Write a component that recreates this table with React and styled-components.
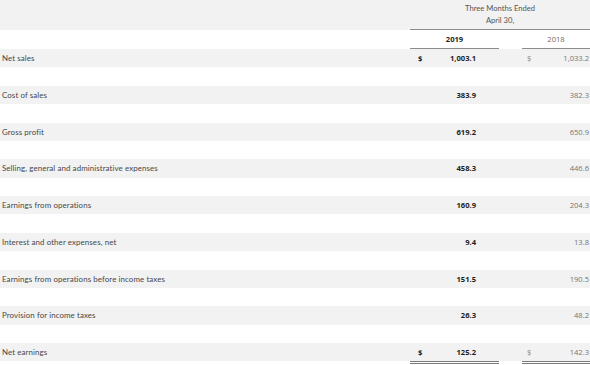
import React from "react";
import styled, { createGlobalStyle } from "styled-components";

const Global = createGlobalStyle`
  html, body { margin: 0; padding: 0; background: #fff; }
  body { font-family: "Lato", "Liberation Sans", sans-serif; min-height: 365px; }
`;

const Table = styled.div`
  width: 590px;
  display: flex;
  flex-direction: column;
`;

const Row = styled.div`
  display: grid;
  grid-template-columns: 410px 89px 23px 68px;
  height: ${(p) => p.$h || 18.375}px;
  background: ${(p) => (p.$grey ? "#f2f2f2" : "#fff")};
  box-sizing: border-box;
`;

const Label = styled.div`
  display: flex;
  align-items: center;
  padding-left: 2px;
  font-size: 7.9px;
  color: #474747;
  letter-spacing: 0.1px;
`;

const Title = styled.div`
  grid-column: 2 / 5;
  display: flex;
  flex-direction: column;
  align-items: center;
  justify-content: center;
  font-size: 7.6px;
  line-height: 12px;
  color: #555;
  border-bottom: 1px solid #8c8c8c;
  padding-bottom: 1px;
  box-sizing: border-box;
`;

const YearCell = styled.div`
  grid-column: ${(p) => p.$col};
  display: flex;
  align-items: center;
  justify-content: center;
  font-family: "Open Sans", "Liberation Sans", sans-serif;
  font-size: 7.6px;
  font-weight: ${(p) => (p.$current ? 700 : 400)};
  color: ${(p) => (p.$current ? "#1e1e1e" : "#6e6e6e")};
  border-bottom: 1px solid #8c8c8c;
  box-sizing: border-box;
`;

const ruleStyles = {
  none: "",
  single: "margin-bottom: -2px; border-bottom: 2px solid #8e8e8e;",
  double: "margin-bottom: -3px; border-bottom: 3px double #7a7a7a;",
};

const Amount = styled.div`
  grid-column: ${(p) => p.$col};
  display: flex;
  align-items: center;
  justify-content: space-between;
  padding: ${(p) => (p.$current ? "0 23px 0 8px" : "0 1px 0 5px")};
  font-family: "Open Sans", "Liberation Sans", sans-serif;
  font-size: 7.6px;
  font-weight: ${(p) => (p.$current ? 700 : 400)};
  color: ${(p) => (p.$current ? "#1e1e1e" : "#767676")};
  box-sizing: border-box;
  ${(p) => ruleStyles[p.$rule || "none"]}
`;

const Dollar = styled.span`
  color: ${(p) => (p.$current ? "#1e1e1e" : "#8a8a8a")};
`;

const rows = [
  { label: "Net sales", a: "1,003.1", b: "1,033.2", dollar: true },
  { label: "Cost of sales", a: "383.9", b: "382.3", rule: "single" },
  { label: "Gross profit", a: "619.2", b: "650.9" },
  { label: "Selling, general and administrative expenses", a: "458.3", b: "446.6", rule: "single" },
  { label: "Earnings from operations", a: "160.9", b: "204.3" },
  { label: "Interest and other expenses, net", a: "9.4", b: "13.8", rule: "single" },
  { label: "Earnings from operations before income taxes", a: "151.5", b: "190.5" },
  { label: "Provision for income taxes", a: "26.3", b: "48.2", rule: "single" },
  { label: "Net earnings", a: "125.2", b: "142.3", dollar: true, rule: "double" },
];

export default function App() {
  return (
    <>
      <Global />
      <Table>
        <Row $grey $h={30}>
          <div />
          <Title>
            <span>Three Months Ended</span>
            <span>April 30,</span>
          </Title>
        </Row>
        <Row $h={19}>
          <div />
          <YearCell $col={2} $current>2019</YearCell>
          <YearCell $col={4}>2018</YearCell>
        </Row>
        {rows.map((r, i) => (
          <React.Fragment key={r.label}>
            <Row $grey>
              <Label>{r.label}</Label>
              <Amount $col={2} $current $rule={r.rule}>
                <Dollar $current>{r.dollar ? "$" : ""}</Dollar>
                <span>{r.a}</span>
              </Amount>
              <Amount $col={4} $rule={r.rule}>
                <Dollar>{r.dollar ? "$" : ""}</Dollar>
                <span>{r.b}</span>
              </Amount>
            </Row>
            {i < rows.length - 1 && <Row />}
          </React.Fragment>
        ))}
      </Table>
    </>
  );
}
